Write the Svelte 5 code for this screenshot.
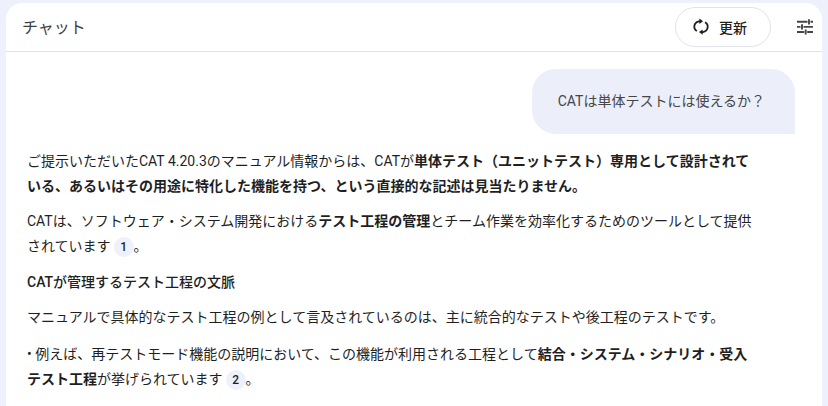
<script>
	const sources = { first: 1, second: 2 };
</script>

<div class="page">
	<section class="panel">
		<header class="head">
			<h1>チャット</h1>
			<div class="actions">
				<button class="refresh">
					<svg width="18" height="18" viewBox="0 0 18 18" fill="none" stroke="#1f1f1f" stroke-width="1.8">
						<path d="M8 3.3 H7 A5.8 5.4 0 0 0 4.9 13.1" />
						<path d="M10 14.1 H11 A5.8 5.4 0 0 0 13.1 4.3" />
						<path d="M7.4 0.6 L11 3.3 L7.4 6 Z" fill="#1f1f1f" stroke="none" />
						<path d="M10.6 11.4 L7 14.1 L10.6 16.8 Z" fill="#1f1f1f" stroke="none" />
					</svg>
					<span>更新</span>
				</button>
				<button class="tune" aria-label="設定">
					<svg width="18" height="18" viewBox="0 0 18 18" fill="none" stroke="#444746" stroke-width="1.9">
						<path d="M1 3.8 H11.5 M14.5 3.8 H17 M13 1.2 V6.4" />
						<path d="M1 8.9 H4.5 M7.5 8.9 H17 M6 6.3 V11.5" />
						<path d="M1 14 H8.2 M11.2 14 H17 M9.7 11.4 V16.6" />
					</svg>
				</button>
			</div>
		</header>

		<div class="body">
			<div class="user-row">
				<div class="bubble">CATは単体テストには使えるか？</div>
			</div>

			<div class="answer">
				<p>ご提示いただいたCAT 4.20.3のマニュアル情報からは、CATが<b>単体テスト（ユニットテスト）専用として設計されている、あるいはその用途に特化した機能を持つ、という直接的な記述は見当たりません。</b></p>
				<p>CATは、ソフトウェア・システム開発における<b>テスト工程の管理</b>とチーム作業を効率化するためのツールとして提供されています<span class="cite">{sources.first}</span>。</p>
				<p><b class="medium">CATが管理するテスト工程の文脈</b></p>
				<p>マニュアルで具体的なテスト工程の例として言及されているのは、主に統合的なテストや後工程のテストです。</p>
				<p class="item">• 例えば、再テストモード機能の説明において、この機能が利用される工程として<b>結合・システム・シナリオ・受入テスト工程</b>が挙げられています<span class="cite">{sources.second}</span>。</p>
			</div>
		</div>
	</section>
</div>

<style>
	:global(body) {
		margin: 0;
		background: #eef0fb;
	}

	.page {
		width: 828px;
		height: 406px;
		overflow: hidden;
		padding: 3px 6px 0 6px;
		box-sizing: border-box;
		font-family: Roboto, "Noto Sans CJK JP", sans-serif;
		color: #1f1f1f;
	}

	.panel {
		background: #fff;
		border-radius: 16px 16px 0 0;
		height: 100%;
	}

	.head {
		height: 48px;
		border-bottom: 1px solid #e2e3ea;
		display: flex;
		align-items: center;
		justify-content: space-between;
		padding: 0 5px 0 16px;
	}

	h1 {
		margin: 0 0 2px;
		font-size: 16px;
		font-weight: 400;
		color: #3c4043;
	}

	.actions {
		display: flex;
		align-items: center;
		gap: 22px;
	}

	button {
		font: inherit;
		background: none;
		border: none;
		padding: 0;
		color: #1f1f1f;
		display: flex;
		align-items: center;
	}

	.refresh {
		width: 96px;
		height: 40px;
		box-sizing: border-box;
		border: 1px solid #e2e3ea;
		border-radius: 20px;
		padding-left: 16px;
		gap: 9px;
		font-size: 14px;
		font-weight: 500;
	}

	.tune {
		width: 24px;
		height: 24px;
		justify-content: center;
	}

	.body {
		padding: 17px 27px 0 21px;
	}

	.user-row {
		display: flex;
		justify-content: flex-end;
	}

	.bubble {
		background: #eceefa;
		border-radius: 24px 24px 0 24px;
		padding: 22px 30px 22px 26px;
		font-size: 14px;
		line-height: 21px;
		color: #444746;
	}

	.answer {
		margin-top: 15px;
		width: 728px;
		font-size: 14px;
		line-height: 25px;
	}

	p {
		margin: 0 0 10.4px;
	}

	.item {
		margin-top: 11.8px;
	}

	b {
		font-weight: 700;
	}

	.medium {
		font-weight: 500;
	}

	.cite {
		display: inline-flex;
		align-items: center;
		justify-content: center;
		width: 20px;
		height: 20px;
		margin-left: 3px;
		border-radius: 50%;
		background: #eef0fb;
		font-size: 12px;
		font-weight: 500;
		line-height: 1;
	}
</style>
